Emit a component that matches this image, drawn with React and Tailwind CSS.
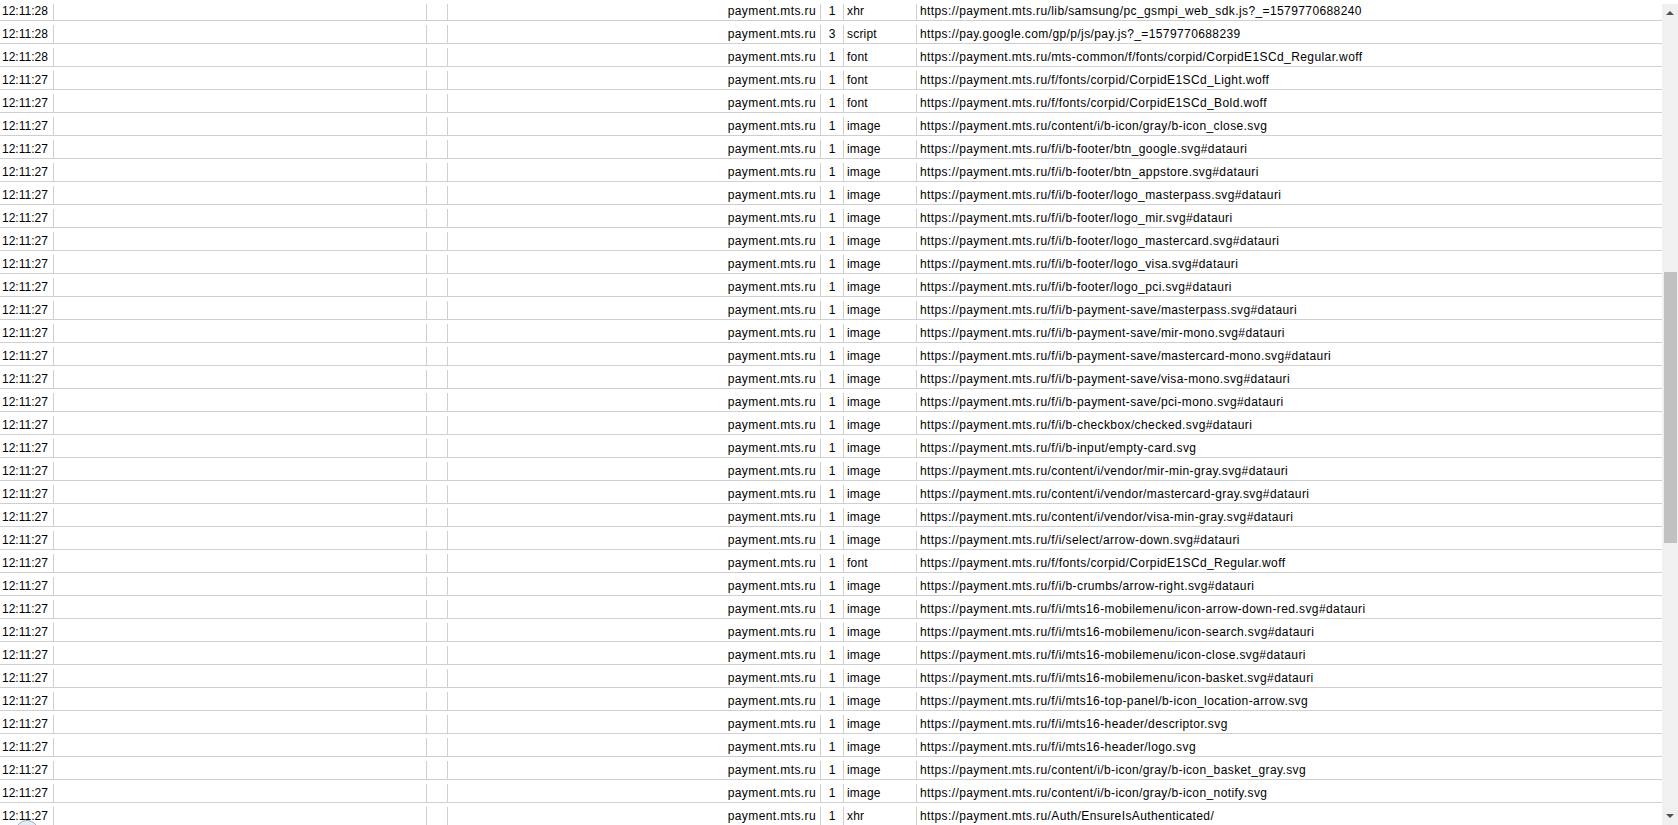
import React from "react"

const base = "https://payment.mts.ru"

// [time, count, type, url]
const rows = [
	["12:11:28", "1", "xhr", base + "/lib/samsung/pc_gsmpi_web_sdk.js?_=1579770688240"],
	["12:11:28", "3", "script", "https://pay.google.com/gp/p/js/pay.js?_=1579770688239"],
	["12:11:28", "1", "font", base + "/mts-common/f/fonts/corpid/CorpidE1SCd_Regular.woff"],
	["12:11:27", "1", "font", base + "/f/fonts/corpid/CorpidE1SCd_Light.woff"],
	["12:11:27", "1", "font", base + "/f/fonts/corpid/CorpidE1SCd_Bold.woff"],
	["12:11:27", "1", "image", base + "/content/i/b-icon/gray/b-icon_close.svg"],
	["12:11:27", "1", "image", base + "/f/i/b-footer/btn_google.svg#datauri"],
	["12:11:27", "1", "image", base + "/f/i/b-footer/btn_appstore.svg#datauri"],
	["12:11:27", "1", "image", base + "/f/i/b-footer/logo_masterpass.svg#datauri"],
	["12:11:27", "1", "image", base + "/f/i/b-footer/logo_mir.svg#datauri"],
	["12:11:27", "1", "image", base + "/f/i/b-footer/logo_mastercard.svg#datauri"],
	["12:11:27", "1", "image", base + "/f/i/b-footer/logo_visa.svg#datauri"],
	["12:11:27", "1", "image", base + "/f/i/b-footer/logo_pci.svg#datauri"],
	["12:11:27", "1", "image", base + "/f/i/b-payment-save/masterpass.svg#datauri"],
	["12:11:27", "1", "image", base + "/f/i/b-payment-save/mir-mono.svg#datauri"],
	["12:11:27", "1", "image", base + "/f/i/b-payment-save/mastercard-mono.svg#datauri"],
	["12:11:27", "1", "image", base + "/f/i/b-payment-save/visa-mono.svg#datauri"],
	["12:11:27", "1", "image", base + "/f/i/b-payment-save/pci-mono.svg#datauri"],
	["12:11:27", "1", "image", base + "/f/i/b-checkbox/checked.svg#datauri"],
	["12:11:27", "1", "image", base + "/f/i/b-input/empty-card.svg"],
	["12:11:27", "1", "image", base + "/content/i/vendor/mir-min-gray.svg#datauri"],
	["12:11:27", "1", "image", base + "/content/i/vendor/mastercard-gray.svg#datauri"],
	["12:11:27", "1", "image", base + "/content/i/vendor/visa-min-gray.svg#datauri"],
	["12:11:27", "1", "image", base + "/f/i/select/arrow-down.svg#datauri"],
	["12:11:27", "1", "font", base + "/f/fonts/corpid/CorpidE1SCd_Regular.woff"],
	["12:11:27", "1", "image", base + "/f/i/b-crumbs/arrow-right.svg#datauri"],
	["12:11:27", "1", "image", base + "/f/i/mts16-mobilemenu/icon-arrow-down-red.svg#datauri"],
	["12:11:27", "1", "image", base + "/f/i/mts16-mobilemenu/icon-search.svg#datauri"],
	["12:11:27", "1", "image", base + "/f/i/mts16-mobilemenu/icon-close.svg#datauri"],
	["12:11:27", "1", "image", base + "/f/i/mts16-mobilemenu/icon-basket.svg#datauri"],
	["12:11:27", "1", "image", base + "/f/i/mts16-top-panel/b-icon_location-arrow.svg"],
	["12:11:27", "1", "image", base + "/f/i/mts16-header/descriptor.svg"],
	["12:11:27", "1", "image", base + "/f/i/mts16-header/logo.svg"],
	["12:11:27", "1", "image", base + "/content/i/b-icon/gray/b-icon_basket_gray.svg"],
	["12:11:27", "1", "image", base + "/content/i/b-icon/gray/b-icon_notify.svg"],
	["12:11:27", "1", "xhr", base + "/Auth/EnsureIsAuthenticated/"],
]

const cell = "border-r border-[#cfcfcf] whitespace-nowrap overflow-hidden"

export default function App() {
	return (
		<div className="relative h-[825px] w-full overflow-hidden bg-white font-['Liberation_Sans',Arial,sans-serif] text-[12px] text-black">
			<div className="flex h-full pt-[4px]">
				<div className="flex-1 overflow-hidden">
					<div className="-mt-[6px]">
						{rows.map((r, i) => (
							<div
								key={i}
								className="grid h-[23px] grid-cols-[54px_373px_21px_373px_23px_73px_1fr] border-b border-[#cfcfcf] pt-[4px] leading-[18px]"
							>
								<div className={cell + " pl-[2px]"}>{r[0]}</div>
								<div className={cell}></div>
								<div className={cell}></div>
								<div className={cell + " pr-[4px] text-right tracking-[0.4px]"}>payment.mts.ru</div>
								<div className={cell + " text-center"}>{r[1]}</div>
								<div className={cell + " pl-[3px] tracking-[0.2px]"}>{r[2]}</div>
								<div className="overflow-hidden whitespace-nowrap pl-[3px] tracking-[0.4px]">{r[3]}</div>
							</div>
						))}
					</div>
				</div>
				<div className="flex w-[16px] flex-col bg-[#f0f0f0]">
					<div className="flex h-[17px] items-center justify-center">
						<div className="h-0 w-0 border-x-[4px] border-b-[4px] border-x-transparent border-b-[#505050]"></div>
					</div>
					<div className="flex-1">
						<div className="ml-[2px] mt-[251px] h-[271px] w-[13px] bg-[#c1c1c1]"></div>
					</div>
					<div className="flex h-[17px] items-center justify-center pb-[2px]">
						<div className="h-0 w-0 border-x-[4px] border-t-[4px] border-x-transparent border-t-[#505050]"></div>
					</div>
				</div>
			</div>
			<div className="absolute left-[15px] top-[820px] h-[24px] w-[24px] rounded-full border border-[#9fb0bf] bg-[#e4edf5]"></div>
		</div>
	)
}
